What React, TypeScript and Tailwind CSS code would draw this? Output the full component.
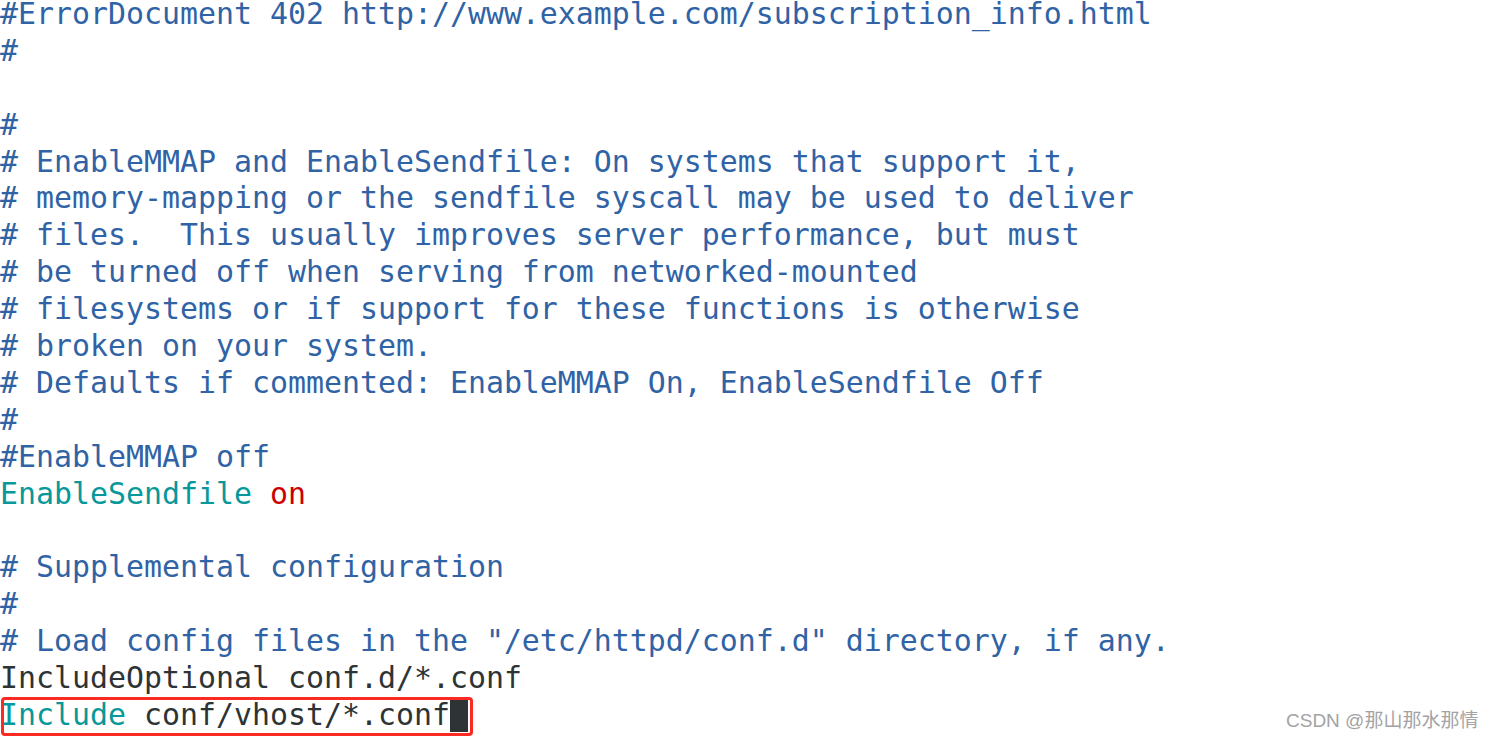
const blue = "text-[#3063a5]";
const teal = "text-[#06989a]";
const red = "text-[#cc0000]";
const dark = "text-[#2e3436]";

type Seg = { t: string; c: string };

const lines: Seg[][] = [
  [{ t: "#ErrorDocument 402 http://www.example.com/subscription_info.html", c: blue }],
  [{ t: "#", c: blue }],
  [],
  [{ t: "#", c: blue }],
  [{ t: "# EnableMMAP and EnableSendfile: On systems that support it,", c: blue }],
  [{ t: "# memory-mapping or the sendfile syscall may be used to deliver", c: blue }],
  [{ t: "# files.  This usually improves server performance, but must", c: blue }],
  [{ t: "# be turned off when serving from networked-mounted", c: blue }],
  [{ t: "# filesystems or if support for these functions is otherwise", c: blue }],
  [{ t: "# broken on your system.", c: blue }],
  [{ t: "# Defaults if commented: EnableMMAP On, EnableSendfile Off", c: blue }],
  [{ t: "#", c: blue }],
  [{ t: "#EnableMMAP off", c: blue }],
  [
    { t: "EnableSendfile", c: teal },
    { t: " ", c: dark },
    { t: "on", c: red },
  ],
  [],
  [{ t: "# Supplemental configuration", c: blue }],
  [{ t: "#", c: blue }],
  [{ t: '# Load config files in the "/etc/httpd/conf.d" directory, if any.', c: blue }],
  [{ t: "IncludeOptional conf.d/*.conf", c: dark }],
];

export default function App() {
  return (
    <div className="relative h-[738px] w-[1493px] overflow-hidden bg-white">
      <pre className="-mt-[4px] font-['DejaVu_Sans_Mono',monospace] text-[29.9px] leading-[36.9px] whitespace-pre">
        {lines.map((segs, i) => (
          <div key={i} className="h-[36.9px]">
            {segs.map((s, j) => (
              <span key={j} className={s.c}>
                {s.t}
              </span>
            ))}
          </div>
        ))}
        {/* last line with cursor, boxed in red */}
        <div className="relative h-[36.9px]">
          <span className={teal}>Include</span>
          <span className={dark}> conf/vhost/*.conf</span>
          <span className="inline-block h-[33px] w-[18px] bg-[#2e3436] align-[-7px]" />
          <span className="absolute left-[1px] top-0 h-[39px] w-[472px] rounded-[4px] border-[3px] border-[#fb2a23]" />
        </div>
      </pre>
      <div className="absolute left-[1286px] top-[711px] font-['Liberation_Sans','Noto_Sans_CJK_SC',sans-serif] text-[19px] leading-none text-[#a3a3a3]">
        CSDN @那山那水那情
      </div>
    </div>
  );
}
